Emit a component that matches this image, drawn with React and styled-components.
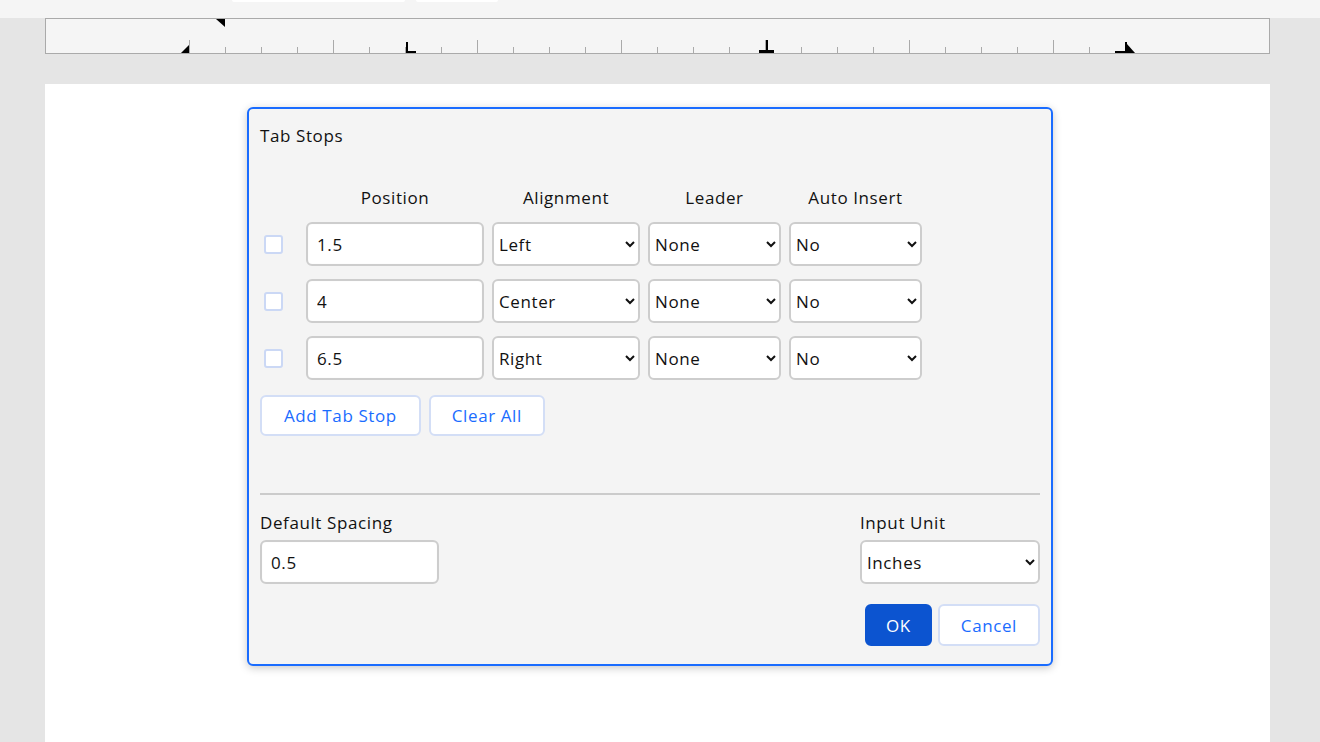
import * as React from 'react'
import styled, {createGlobalStyle} from 'styled-components'

const GlobalStyle = createGlobalStyle`
	html, body {
		margin: 0;
		padding: 0;
		background: #e5e5e5;
		font-family: "Open Sans", "Noto Sans", sans-serif;
		color: #111;
	}
	* {
		box-sizing: border-box;
	}
`

const Shell = styled.div`
	width: 1320px;
	height: 742px;
	overflow: hidden;
	background: #e5e5e5;
`

const Toolbar = styled.div`
	height: 18px;
	background: #f5f5f5;
	display: flex;
	align-items: flex-start;
	gap: 11px;
	padding-left: 232px;
`

const ToolbarStub = styled.div`
	width: ${p => p.$w}px;
	height: 2px;
	background: #fff;
	border-radius: 0 0 4px 4px;
`

const RulerBar = styled.div`
	margin: 0 50px 0 45px;
	height: 36px;
	background: #f5f5f5;
	border: 1px solid #aaa;

	svg {
		display: block;
	}
`

const Page = styled.div`
	margin: 30px 50px 0 45px;
	height: 700px;
	background: #fff;
	padding: 23px 0 0 202px;
`

const Dialog = styled.div`
	width: 806px;
	background: #f4f4f4;
	border: 2px solid #1a6cff;
	border-radius: 6px;
	box-shadow: 0 2px 8px rgba(0, 0, 0, 0.22);
	padding: 14px 11px 18px;
	display: flex;
	flex-direction: column;
	font-size: 17px;
	letter-spacing: 0.6px;
`

const Title = styled.div`
	line-height: 26px;
`

const StopGrid = styled.div`
	margin-top: 37px;
	display: grid;
	grid-template-columns: 38px 178px 148px 133px 133px;
	column-gap: 8px;
	row-gap: 13px;
	align-items: center;
`

const HeadCell = styled.div`
	line-height: 24px;
	text-align: center;
	margin-bottom: -1px;
`

const Check = styled.input.attrs({type: 'checkbox'})`
	appearance: none;
	margin: 0 0 0 4px;
	width: 19px;
	height: 19px;
	background: #fff;
	border: 2px solid #cbd8f5;
	border-radius: 3px;
`

const Field = styled.input`
	height: 44px;
	width: ${p => p.$w ? p.$w + 'px' : '100%'};
	border: 2px solid #cdcdcd;
	border-radius: 6px;
	background: #fff;
	box-shadow: inset 0 0 1px rgba(0, 0, 0, 0.1);
	padding: 0 9px;
	font: inherit;
	letter-spacing: inherit;
	color: #111;
	outline: none;
`

const Select = styled.select`
	height: 44px;
	width: ${p => p.$w ? p.$w + 'px' : '100%'};
	border: 2px solid #cdcdcd;
	border-radius: 6px;
	background: #fff;
	padding: 0 1px;
	font: inherit;
	letter-spacing: inherit;
	color: #111;
	outline: none;
`

const ActionRow = styled.div`
	display: flex;
	gap: ${p => p.$gap || 8}px;
	margin-top: ${p => p.$top || 15}px;
	justify-content: ${p => p.$end ? 'flex-end' : 'flex-start'};
`

const Button = styled.button`
	height: ${p => p.$h || 41}px;
	padding: 0 ${p => p.$pad || 21}px;
	border-radius: 6px;
	font: inherit;
	letter-spacing: inherit;
	cursor: pointer;
	background: ${p => p.$primary ? '#0c54d0' : '#fff'};
	color: ${p => p.$primary ? '#fff' : '#1a6cff'};
	border: 2px solid ${p => p.$primary ? '#0c54d0' : '#d3def6'};
`

const Divider = styled.hr`
	margin: 57px 0 0;
	border: none;
	border-top: 2px solid #cbcbcb;
`

const Footer = styled.div`
	margin-top: 16px;
	display: flex;
	justify-content: space-between;
`

const FieldGroup = styled.div`
	display: flex;
	flex-direction: column;
	gap: 5px;
`

const Label = styled.label`
	line-height: 24px;
`

const Ruler = () => {
	const origin = 189 - 46
	const ticks = []
	for (let k = 0; k <= 25; k++) {
		const x = origin + k * 36 + 0.5
		const tall = k % 4 === 0
		ticks.push(<line key={k} x1={x} x2={x} y1={tall ? 21 : 28} y2={34} stroke="#aaa" strokeWidth="1" />)
	}
	const tx = v => origin + v * 144
	return (
		<svg width="1223" height="34" viewBox="0 0 1223 34">
			{ticks}
			<polygon points={`${origin - 8},34 ${origin},34 ${origin},26`} fill="#000" />
			<polygon points={`${origin + 27},0 ${origin + 36},0 ${origin + 36},8`} fill="#000" />
			{/* left tab */}
			<rect x={tx(1.5) + 1} y={23} width={2} height={11} fill="#000" />
			<rect x={tx(1.5) + 1} y={32} width={10} height={2} fill="#000" />
			{/* center tab */}
			<rect x={tx(4) + 1} y={21} width={2} height={13} fill="#000" />
			<rect x={tx(4) - 6} y={31} width={15} height={3} fill="#000" />
			{/* right tab */}
			<rect x={tx(6.5)} y={23} width={2} height={11} fill="#000" />
			<rect x={tx(6.5) - 10} y={32} width={12} height={2} fill="#000" />
			<polygon points={`${tx(6.5) + 2},25 ${tx(6.5) + 2},34 ${tx(6.5) + 10},34`} fill="#000" />
		</svg>
	)
}

const stops = [
	{pos: '1.5', align: 'Left'},
	{pos: '4', align: 'Center'},
	{pos: '6.5', align: 'Right'},
]

const App = () => {
	return (
		<Shell>
			<GlobalStyle />
			<Toolbar>
				<ToolbarStub $w={173} />
				<ToolbarStub $w={82} />
			</Toolbar>
			<RulerBar>
				<Ruler />
			</RulerBar>
			<Page>
				<Dialog>
					<Title>Tab Stops</Title>
					<StopGrid>
						<div />
						<HeadCell>Position</HeadCell>
						<HeadCell>Alignment</HeadCell>
						<HeadCell>Leader</HeadCell>
						<HeadCell>Auto Insert</HeadCell>
						{stops.map(s => (
							<React.Fragment key={s.pos}>
								<Check />
								<Field defaultValue={s.pos} />
								<Select defaultValue={s.align}>
									<option>Left</option>
									<option>Center</option>
									<option>Right</option>
									<option>Decimal</option>
								</Select>
								<Select defaultValue="None">
									<option>None</option>
									<option>Dot</option>
									<option>Hyphen</option>
									<option>Underscore</option>
								</Select>
								<Select defaultValue="No">
									<option>No</option>
									<option>Yes</option>
								</Select>
							</React.Fragment>
						))}
					</StopGrid>
					<ActionRow>
						<Button $pad={22}>Add Tab Stop</Button>
						<Button>Clear All</Button>
					</ActionRow>
					<Divider />
					<Footer>
						<FieldGroup>
							<Label>Default Spacing</Label>
							<Field $w={179} defaultValue="0.5" />
						</FieldGroup>
						<FieldGroup>
							<Label>Input Unit</Label>
							<Select $w={180} defaultValue="Inches">
								<option>Inches</option>
								<option>Centimeters</option>
								<option>Points</option>
							</Select>
						</FieldGroup>
					</Footer>
					<ActionRow $end $top={20} $gap={6}>
						<Button $primary $pad={19} $h={42}>OK</Button>
						<Button $h={42}>Cancel</Button>
					</ActionRow>
				</Dialog>
			</Page>
		</Shell>
	)
}

export default App
